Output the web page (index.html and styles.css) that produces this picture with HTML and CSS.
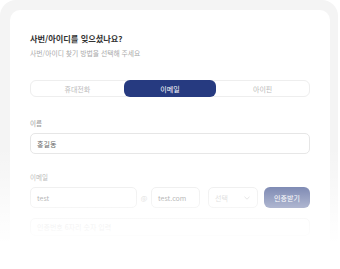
FILE: index.html
```html
<!DOCTYPE html>
<html lang="ko">
<head>
  <meta charset="UTF-8" />
  <meta name="viewport" content="width=device-width, initial-scale=1.0" />
  <title>사번/아이디 찾기</title>
  <link rel="stylesheet" href="styles.css">
</head>
<body>
  <div class="tela">
    <div class="moldura">
      <div class="cartao">
        <h1 class="titulo">사번/아이디를 잊으셨나요?</h1>
        <p class="subtitulo">사번/아이디 찾기 방법을 선택해 주세요</p>

        <div class="abas" role="tablist">
          <button class="aba">휴대전화</button>
          <button class="aba ativa">이메일</button>
          <button class="aba">아이핀</button>
        </div>

        <label class="rotulo">이름</label>
        <div class="campo"><span class="valor">홍길동</span></div>

        <label class="rotulo rotulo-email">이메일</label>
        <div class="linha-email">
          <div class="campo campo-id"><span class="valor">test</span></div>
          <span class="arroba">@</span>
          <div class="campo campo-dominio"><span class="valor">test.com</span></div>
          <div class="campo campo-select">
            <span class="vazio">선택</span>
            <svg width="6" height="4" viewBox="0 0 6 4"><path d="M0.5 0.8 L3 3.2 L5.5 0.8" fill="none" stroke="#bbb" stroke-width="0.8"/></svg>
          </div>
          <button class="botao-auth">인증받기</button>
        </div>

        <div class="campo campo-codigo"><span class="vazio">인증번호 6자리 숫자 입력</span></div>
        <button class="botao-confirmar">확인</button>
      </div>
    </div>
    <div class="esmaecer"></div>
  </div>
</body>
</html>
```

FILE: styles.css
```css
* {
  margin: 0; padding: 0; box-sizing: border-box;
}
body {
  background: #fff;
  font-family: "Noto Sans CJK KR", "Noto Sans", sans-serif;
  overflow: hidden;
}

.tela {
  position: relative;
  height: 269px;
  overflow: hidden;
}

.moldura {
  width: 338px;
  background: #f4f4f4;
  border-radius: 16px;
  padding: 10px 8px 40px 10px;
}

.cartao {
  background: #fff;
  border-radius: 10px;
  padding: 22px 20px 30px;
  display: flex;
  flex-direction: column;
}

.titulo {
  font-size: 8.2px;
  line-height: 12px;
  font-weight: 700;
  color: #333;
}

.subtitulo {
  font-size: 6.8px;
  line-height: 12px;
  color: #aaa;
  margin-top: 3px;
}

.abas {
  display: grid;
  grid-template-columns: 1fr 1fr 1fr;
  height: 17px;
  margin-top: 21px;
  border: 1px solid #eee;
  border-radius: 6px;
}

.aba {
  background: none;
  border: none;
  font-family: inherit;
  font-size: 7px;
  color: #bbb;
  border-radius: 6px;
}

.aba.ativa {
  background: #263a80;
  color: #fff;
  margin: -1px 0;
}

.rotulo {
  font-size: 6.5px;
  line-height: 10px;
  color: #999;
  margin-top: 21px;
}

.rotulo-email {
  margin-top: 18px;
}

.campo {
  height: 21px;
  border: 1px solid #e6e6e6;
  border-radius: 5px;
  margin-top: 5px;
  display: flex;
  align-items: center;
  padding: 0 6px;
  font-size: 7px;
}

.valor {
  color: #666;
}

.vazio {
  color: #bbb;
}

.linha-email {
  display: flex;
  align-items: center;
  margin-top: 5px;
  height: 21px;
}

.linha-email .campo {
  margin-top: 0;
}

.campo-id {
  width: 107px;
}

.arroba {
  width: 14px;
  text-align: center;
  font-size: 7px;
  color: #bbb;
}

.campo-dominio {
  width: 49px;
}

.campo-select {
  width: 50px;
  margin-left: 8px;
  justify-content: space-between;
  padding-right: 7px;
}

.botao-auth {
  width: 46px;
  height: 21px;
  margin-left: 6px;
  border: none;
  border-radius: 6px;
  background: #263a80;
  color: #fff;
  font-family: inherit;
  font-size: 7px;
}

.campo-codigo {
  margin-top: 10px;
  height: 18px;
}

.botao-confirmar {
  margin-top: 12px;
  height: 22px;
  border: none;
  border-radius: 6px;
  background: #263a80;
  color: #fff;
  font-family: inherit;
  font-size: 7px;
}

/* esmaecimento da parte de baixo */
.esmaecer {
  position: absolute;
  left: 0;
  top: 0;
  width: 100%;
  height: 100%;
  pointer-events: none;
  background: linear-gradient(to bottom, rgba(255,255,255,0) 148px, #fff 243px);
}
```
